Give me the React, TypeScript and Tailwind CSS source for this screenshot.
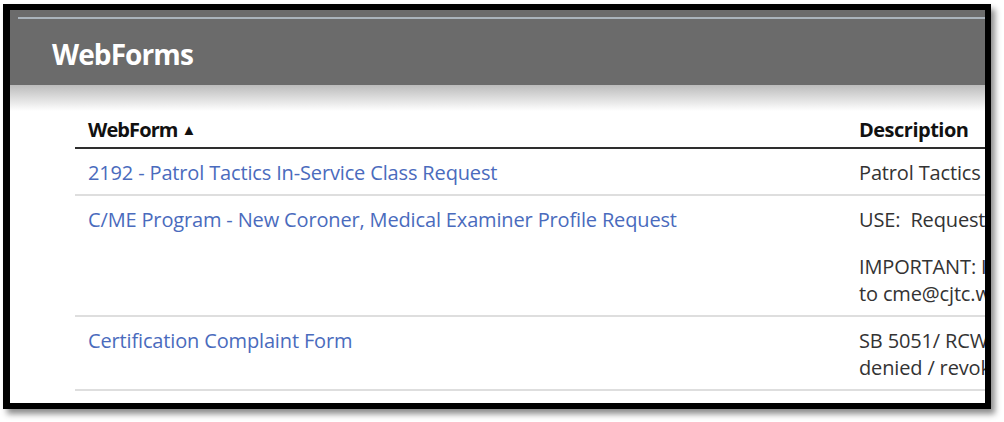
export default function App() {
  const rows = [
    {
      title: '2192 - Patrol Tactics In-Service Class Request',
      desc: [['Patrol Tactics In-Service Class Request']],
    },
    {
      title: 'C/ME Program - New Coroner, Medical Examiner Profile Request',
      desc: [
        ['USE:\u00a0 Request a new Coroner or Medical Examiner profile'],
        ['IMPORTANT: If you have questions, please send an email', 'to cme@cjtc.wa.gov'],
      ],
    },
    {
      title: 'Certification Complaint Form',
      desc: [['SB 5051/ RCW 43.101.105 complaints of officers whose certification may be', 'denied / revoked']],
    },
  ];

  return (
    <div className="w-[1004px] h-[422px] bg-white overflow-hidden font-['Open_Sans',sans-serif]">
      <div className="ml-[3px] mt-[4px] w-[988px] h-[405px] border-[6px] border-l-[7px] border-black shadow-[4px_5px_6px_rgba(0,0,0,0.45)] overflow-hidden bg-white">
        {/* header bar */}
        <div className="h-[75px] bg-[#6b6b6b] pt-[7px]">
          <div className="ml-[8px] h-[2px] bg-[#aab3bb]" />
          <h1 className="ml-[42px] mt-[17px] text-[28px] leading-[36px] font-bold text-white tracking-[-0.9px]">WebForms</h1>
        </div>
        <div className="h-[26px] bg-gradient-to-b from-[#bcbcbc] to-white" />

        {/* table */}
        <div className="ml-[65px] w-[1200px] text-[20px] text-[#333] tracking-[-0.15px]">
          <div className="flex border-b-2 border-[#2e2e2e] pt-[5px] pb-[4px] font-bold text-[#111] leading-[27px]">
            <div className="w-[771px] shrink-0 pl-[13px] flex items-center gap-[4px]">
              <span className="tracking-[-0.9px]">WebForm</span>
              <span className="text-[15px]">▲</span>
            </div>
            <div className="pl-[13px] tracking-[-0.5px]">Description</div>
          </div>
          {rows.map((r) => (
            <div key={r.title} className="flex border-b-2 border-[#dedede] pt-[10px] pb-[8px] leading-[27px]">
              <div className="w-[771px] shrink-0 pl-[13px]">
                <a className="text-[#4a6bbd]">{r.title}</a>
              </div>
              <div className="pl-[13px] whitespace-nowrap flex flex-col gap-[20px]">
                {r.desc.map((p, i) => (
                  <div key={i}>
                    {p.map((l) => (
                      <div key={l}>{l}</div>
                    ))}
                  </div>
                ))}
              </div>
            </div>
          ))}
        </div>
      </div>
    </div>
  );
}
